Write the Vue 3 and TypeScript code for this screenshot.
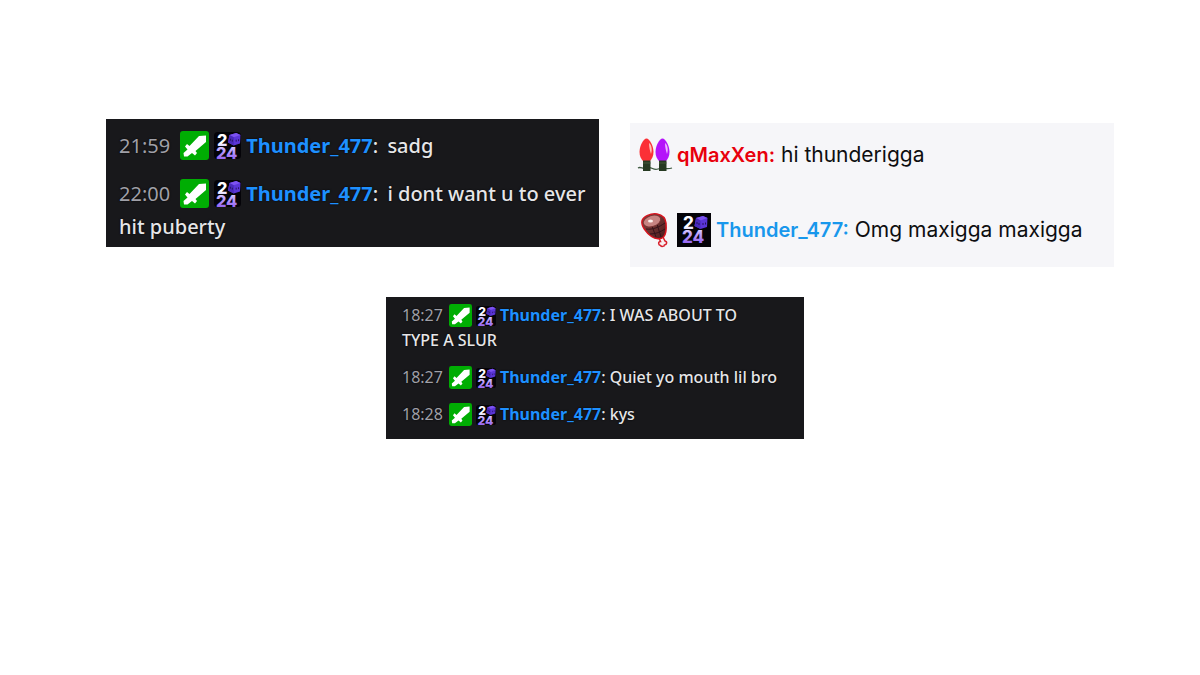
<script setup lang="ts">
type BadgeKind = 'sword' | 'recap' | 'lights' | 'ham'

interface ChatMessage {
  id: number
  time?: string
  badges: BadgeKind[]
  user: string
  tone: 'blue' | 'red' | 'sky'
  text: string
}

interface ChatPanel {
  name: string
  messages: ChatMessage[]
}

const panels: ChatPanel[] = [
  {
    name: 'large',
    messages: [
      { id: 1, time: '21:59', badges: ['sword', 'recap'], user: 'Thunder_477', tone: 'blue', text: 'sadg' },
      { id: 2, time: '22:00', badges: ['sword', 'recap'], user: 'Thunder_477', tone: 'blue', text: 'i dont want u to ever hit puberty' },
    ],
  },
  {
    name: 'light',
    messages: [
      { id: 3, badges: ['lights'], user: 'qMaxXen', tone: 'red', text: 'hi thunderigga' },
      { id: 4, badges: ['ham', 'recap'], user: 'Thunder_477', tone: 'sky', text: 'Omg maxigga maxigga' },
    ],
  },
  {
    name: 'small',
    messages: [
      { id: 5, time: '18:27', badges: ['sword', 'recap'], user: 'Thunder_477', tone: 'blue', text: 'I WAS ABOUT TO\nTYPE A SLUR' },
      { id: 6, time: '18:27', badges: ['sword', 'recap'], user: 'Thunder_477', tone: 'blue', text: 'Quiet yo mouth lil bro' },
      { id: 7, time: '18:28', badges: ['sword', 'recap'], user: 'Thunder_477', tone: 'blue', text: 'kys' },
    ],
  },
]
</script>

<template>
  <main class="page">
    <svg class="defs" aria-hidden="true">
      <defs>
        <linearGradient id="digits" gradientUnits="userSpaceOnUse" x1="0" y1="2" x2="0" y2="34">
          <stop offset="0.35" stop-color="#ffffff" />
          <stop offset="0.55" stop-color="#c4adff" />
          <stop offset="0.9" stop-color="#935ff2" />
        </linearGradient>
        <linearGradient id="meat" x1="0" y1="0" x2="1" y2="1">
          <stop offset="0" stop-color="#8d4a45" />
          <stop offset="1" stop-color="#4a1a1c" />
        </linearGradient>
      </defs>
    </svg>
    <section v-for="panel in panels" :key="panel.name" class="panel" :class="panel.name">
      <p v-for="m in panel.messages" :key="m.id" class="message">
        <time v-if="m.time" class="time">{{ m.time }}</time>
        <template v-for="b in m.badges" :key="b">
          <svg v-if="b === 'sword'" class="badge sword" viewBox="0 0 29 29" aria-hidden="true">
            <rect width="29" height="29" rx="3" fill="#00ad03" />
            <path d="M26 4.500V11L15.500 20l1.500 2-2 2.500-3-2.500-4.500 3.500H4L3.500 22l4-3.500-2.500-3L7 13l2.500 2L19 5z" fill="#fff" />
          </svg>
          <svg v-else-if="b === 'recap'" class="badge recap" :viewBox="m.time ? '3 2 28 28' : '0 0 34 34'" aria-hidden="true">
            <rect v-if="m.time" x="3" y="2" width="28" height="28" rx="4" fill="#040308" />
            <rect v-else width="34" height="34" fill="#040308" />
            <text x="6" y="16" class="digits">2</text>
            <text x="5" y="30" class="digits">24</text>
            <path d="M19 5l7-2 4.500 2-.5 9-6.500 2-6-3z" fill="#5b35d8" />
            <path d="M19 5l7-2 4.500 2-7 2.500z" fill="#7c52f0" />
            <path d="M19 5l4.500 2.500v8.500l-6-3z" fill="#4a2abb" />
            <path d="M20 9v2M22 10v2M26 10v2M28.500 9.500v2" stroke="#24125f" stroke-width="1" />
          </svg>
          <svg v-else-if="b === 'lights'" class="badge" viewBox="0 0 34 34" aria-hidden="true">
            <path d="M0 30c3-2 5 2 9 0 5-2 6 3 11 1 5-2 8 1 14-1" fill="none" stroke="#3d5a40" stroke-width="1.300" />
            <path d="M8.500 0.500C5.500 0.500 1.500 8 1.500 14c0 4 1.500 7 3.500 9h7c2-2 3.500-5 3.500-9 0-6-4-13.500-7-13.500z" fill="#fb3036" />
            <path d="M24.500 0.500c-3 0-7 7.500-7 13.500 0 4 1.500 7 3.500 9h7c2-2 3.500-5 3.500-9 0-6-4-13.500-7-13.500z" fill="#b414fa" />
            <path d="M11 5c2.500 2 3.500 6 2 11-1-3-2-7-2-11z" fill="#ffc0b8" />
            <path d="M27 5c2.500 2 3.500 6 2 11-1-3-2-7-2-11z" fill="#f0b8ff" />
            <path d="M5 22.500h7.500V33H5zM21 22.500h7.500V33H21z" fill="#263a22" />
            <path d="M5 25h7.500M21 25h7.500" stroke="#45583a" stroke-width="1" />
          </svg>
          <svg v-else class="badge" viewBox="0 0 34 34" aria-hidden="true">
            <path d="M20.500 24l2 4.500c-2.500 0-2.500 3.500 0 4 1 1.500 4 1 4-.5 2.500 0 3-3.500.5-4L24.500 23z" fill="#f8eef0" stroke="#d8202c" stroke-width="1.500" />
            <path d="M4 8C5 3.500 13 0 19 1c5 1 8.500 4 9 9 .5 6 .5 11-2.500 14-2.500 2.500-8 2.500-12-.5C8 19.500 3 13 4 8z" fill="url(#meat)" stroke="#d8141f" stroke-width="1.500" />
            <path d="M14 13l4 11M19 11l4 13M8 16c7 1 13-2 19-6M12 21c6 0 10-2 15-5" fill="none" stroke="#35131a" stroke-width="1" />
            <ellipse cx="14" cy="8" rx="9" ry="5.500" transform="rotate(-18 14 8)" fill="#c78482" stroke="#7a3535" stroke-width="1" />
            <ellipse cx="12.500" cy="8" rx="2.500" ry="1.500" fill="#fff1ee" />
          </svg>
        </template>
        <span class="user" :class="m.tone">{{ m.user }}</span><span class="colon" :class="{ [m.tone]: !m.time }">:</span>
        {{ m.text }}
      </p>
    </section>
  </main>
</template>

<style>
body {
  margin: 0;
  background: #fff;
}
</style>

<style scoped>
.page {
  display: grid;
  grid-template-columns: 493fr 484fr;
  column-gap: 31px;
  align-items: start;
  padding: 119px 86px 40px 106px;
}
.defs {
  position: absolute;
  width: 0;
  height: 0;
}
.panel {
  display: flex;
  flex-direction: column;
  box-sizing: border-box;
  background: #18181b;
  color: #e6e6e8;
  font-family: "Comic Sans MS", "Noto Sans", sans-serif;
}
.large {
  padding: 10px 8px 4px 13px;
  gap: 15px;
  font-size: 20px;
  line-height: 33px;
}
.light {
  margin-top: 4px;
  padding: 15px 8px 20px;
  gap: 41px;
  background: #f6f6f9;
  color: #0e0e10;
  font-family: Inter, sans-serif;
  font-size: 21px;
  line-height: 34px;
}
.small {
  grid-column: 1 / -1;
  margin: 30px 310px 0 280px;
  padding: 6px 16px 12px;
  gap: 12px;
  font-size: 16px;
  line-height: 25px;
}
.message {
  margin: 0;
  white-space: pre-line;
}
.large .message,
.small .message {
  font-weight: 500;
  text-shadow: 0 0 2px #000;
}
.time {
  color: #a0a0a8;
  font-weight: 400;
}
.badge {
  display: inline-block;
  width: 34px;
  height: 34px;
  margin-right: 5px;
  vertical-align: top;
  overflow: visible;
}
.large .badge {
  width: 29px;
  height: 29px;
  margin-top: 2px;
}
.large .recap {
  width: 27px;
  height: 27px;
  margin-top: 3px;
}
.small .badge {
  width: 23px;
  height: 23px;
  margin-top: 1px;
  margin-right: 4px;
}
.small .recap {
  width: 20px;
  height: 20px;
  margin-top: 3px;
}
.large .time {
  margin-right: 10px;
}
.small .time {
  margin-right: 6px;
}
.large .colon {
  margin-right: 4px;
}
.digits {
  fill: url(#digits);
  font: 800 17px Inter, sans-serif;
  text-shadow: none;
}
.user {
  font-weight: 700;
}
.light .user,
.light .colon {
  font-size: 20px;
  font-weight: 600;
}
.blue {
  color: #1e90ff;
}
.sky {
  color: #1897ec;
}
.red {
  color: #e8000c;
}
</style>
